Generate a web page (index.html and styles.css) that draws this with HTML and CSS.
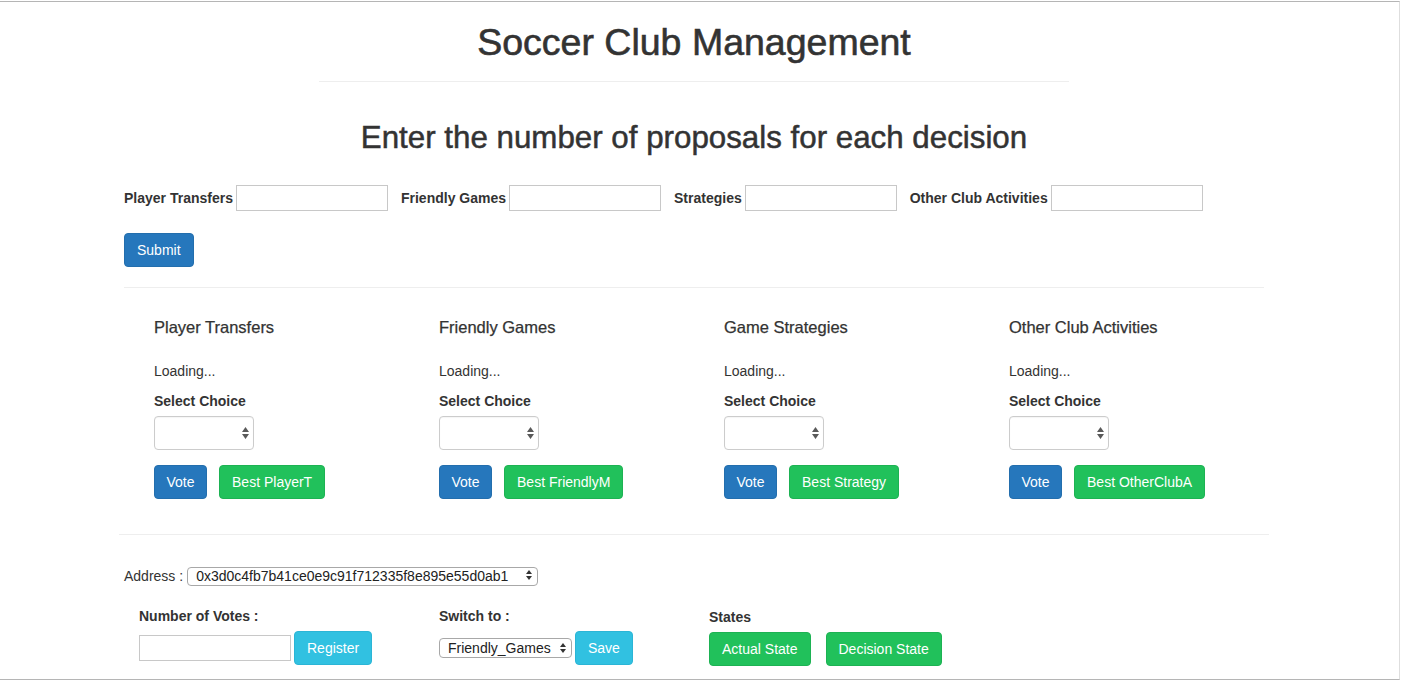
FILE: index.html
```html
<!DOCTYPE html>
<html lang="en">
<head>
<meta charset="utf-8">
<title>Soccer Club Management</title>
<link rel="stylesheet" href="styles.css">
</head>
<body>
<div class="window">
  <div class="container">
    <h1 class="title">Soccer Club Management</h1>
    <hr class="title-rule">
    <h2 class="subtitle">Enter the number of proposals for each decision</h2>

    <form class="proposal-form">
      <div class="inline-fields">
        <label class="field"><span>Player Transfers</span><input type="text" class="text-input"></label>
        <label class="field"><span>Friendly Games</span><input type="text" class="text-input"></label>
        <label class="field"><span>Strategies</span><input type="text" class="text-input"></label>
        <label class="field"><span>Other Club Activities</span><input type="text" class="text-input"></label>
      </div>
      <button class="btn btn-primary submit-btn" type="button">Submit</button>
    </form>

    <hr class="rule">

    <div class="decisions">
      <div class="decision">
        <h4 class="decision-title">Player Transfers</h4>
        <p class="loading">Loading...</p>
        <label class="choice-label">Select Choice</label>
        <div class="select-wrap">
          <select class="choice-select"></select>
          <svg class="arrows" width="7" height="12" viewBox="0 0 7 12"><path d="M0 5 L3.5 0 L7 5 Z M0 7 L7 7 L3.5 12 Z" fill="#5a5a5a"/></svg>
        </div>
        <div class="actions">
          <button class="btn btn-primary btn-vote" type="button">Vote</button>
          <button class="btn btn-success" type="button">Best PlayerT</button>
        </div>
      </div>
      <div class="decision">
        <h4 class="decision-title">Friendly Games</h4>
        <p class="loading">Loading...</p>
        <label class="choice-label">Select Choice</label>
        <div class="select-wrap">
          <select class="choice-select"></select>
          <svg class="arrows" width="7" height="12" viewBox="0 0 7 12"><path d="M0 5 L3.5 0 L7 5 Z M0 7 L7 7 L3.5 12 Z" fill="#5a5a5a"/></svg>
        </div>
        <div class="actions">
          <button class="btn btn-primary btn-vote" type="button">Vote</button>
          <button class="btn btn-success" type="button">Best FriendlyM</button>
        </div>
      </div>
      <div class="decision">
        <h4 class="decision-title">Game Strategies</h4>
        <p class="loading">Loading...</p>
        <label class="choice-label">Select Choice</label>
        <div class="select-wrap">
          <select class="choice-select"></select>
          <svg class="arrows" width="7" height="12" viewBox="0 0 7 12"><path d="M0 5 L3.5 0 L7 5 Z M0 7 L7 7 L3.5 12 Z" fill="#5a5a5a"/></svg>
        </div>
        <div class="actions">
          <button class="btn btn-primary btn-vote" type="button">Vote</button>
          <button class="btn btn-success" type="button">Best Strategy</button>
        </div>
      </div>
      <div class="decision">
        <h4 class="decision-title">Other Club Activities</h4>
        <p class="loading">Loading...</p>
        <label class="choice-label">Select Choice</label>
        <div class="select-wrap">
          <select class="choice-select"></select>
          <svg class="arrows" width="7" height="12" viewBox="0 0 7 12"><path d="M0 5 L3.5 0 L7 5 Z M0 7 L7 7 L3.5 12 Z" fill="#5a5a5a"/></svg>
        </div>
        <div class="actions">
          <button class="btn btn-primary btn-vote" type="button">Vote</button>
          <button class="btn btn-success" type="button">Best OtherClubA</button>
        </div>
      </div>
    </div>

    <hr class="rule rule-wide">

    <div class="address-row">
      <span>Address :</span>
      <div class="native-wrap address-wrap">
        <select class="native-select address-select"><option>0x3d0c4fb7b41ce0e9c91f712335f8e895e55d0ab1</option></select>
        <svg class="arrows small-arrows" width="6" height="10" viewBox="0 0 6 10"><path d="M0 4 L3 0 L6 4 Z M0 6 L6 6 L3 10 Z" fill="#333"/></svg>
      </div>
    </div>

    <div class="controls">
      <div class="control-group votes-group">
        <label class="control-label">Number of Votes :</label>
        <div class="control-row">
          <input type="text" class="text-input">
          <button class="btn btn-info" type="button">Register</button>
        </div>
      </div>
      <div class="control-group switch-group">
        <label class="control-label">Switch to :</label>
        <div class="control-row">
          <div class="native-wrap switch-wrap">
            <select class="native-select switch-select"><option>Friendly_Games</option></select>
            <svg class="arrows small-arrows" width="6" height="10" viewBox="0 0 6 10"><path d="M0 4 L3 0 L6 4 Z M0 6 L6 6 L3 10 Z" fill="#333"/></svg>
          </div>
          <button class="btn btn-info" type="button">Save</button>
        </div>
      </div>
      <div class="control-group states-group">
        <label class="control-label">States</label>
        <div class="control-row state-row">
          <button class="btn btn-success" type="button">Actual State</button>
          <button class="btn btn-success" type="button">Decision State</button>
        </div>
      </div>
    </div>
  </div>
</div>
</body>
</html>
```

FILE: styles.css
```css
* {
  box-sizing: border-box;
}

body {
  margin: 0;
  padding-top: 1px;
  background: #fff;
  color: #333;
  font-family: "Liberation Sans", Arial, Helvetica, sans-serif;
  font-size: 14px;
  line-height: 20px;
}

.window {
  width: 1400px;
  height: 679px;
  border-top: 1px solid #b5b5b5;
  border-bottom: 1px solid #b5b5b5;
  border-right: 1px solid #dedede;
  overflow: hidden;
}

.container {
  width: 1140px;
  margin-left: 124px;
  padding-top: 20px;
}

.title {
  margin: 0;
  font-size: 37.5px;
  line-height: 40px;
  font-weight: normal;
  text-align: center;
  color: #333;
  -webkit-text-stroke: 0.6px #333;
}

.title-rule {
  width: 750px;
  height: 0;
  margin: 19px auto 0;
  border: 0;
  border-top: 1px solid #eee;
}

.subtitle {
  margin: 39px 0 0;
  font-size: 31.3px;
  line-height: 34px;
  font-weight: normal;
  text-align: center;
  color: #333;
  -webkit-text-stroke: 0.5px #333;
}

.proposal-form {
  margin: 0;
}

.inline-fields {
  display: flex;
  align-items: center;
  gap: 13px;
  margin-top: 30px;
}

.field {
  display: flex;
  align-items: center;
  gap: 3px;
  font-weight: bold;
}

.text-input {
  width: 152px;
  height: 26px;
  margin: 0;
  padding: 2px 6px;
  border: 1px solid #c8c8c8;
  border-radius: 0;
  background: #fff;
  font: inherit;
}

.btn {
  display: inline-block;
  height: 34px;
  margin: 0;
  padding: 6px 12px;
  border: 1px solid transparent;
  border-radius: 4px;
  color: #fff;
  font-family: "Liberation Sans", Arial, Helvetica, sans-serif;
  font-size: 14px;
  line-height: 20px;
  white-space: nowrap;
  cursor: pointer;
}

.btn-vote {
  padding: 6px 11.5px;
}

.btn-primary {
  background: #2677bc;
  border-color: #236ead;
}

.btn-success {
  background: #21c15b;
  border-color: #1db253;
}

.btn-info {
  background: #31c1e1;
  border-color: #2bb5d6;
}

.submit-btn {
  display: block;
  margin-top: 22px;
}

.rule {
  height: 0;
  margin: 20px 0 0;
  border: 0;
  border-top: 1px solid #eee;
}

.rule-wide {
  margin: 35px -5px 0;
}

.decisions {
  display: flex;
  margin-top: 29px;
  padding-left: 30px;
}

.decision {
  flex: 0 0 285px;
}

.decision-title {
  margin: 0;
  font-size: 16.5px;
  line-height: 20px;
  font-weight: normal;
  -webkit-text-stroke: 0.25px #333;
}

.loading {
  margin: 24px 0 0;
}

.choice-label {
  display: block;
  margin-top: 10px;
  font-weight: bold;
}

.select-wrap {
  position: relative;
  width: 100px;
  height: 34px;
  margin-top: 5px;
}

.choice-select {
  width: 100px;
  height: 34px;
  margin: 0;
  border: 1px solid #ccc;
  border-radius: 4px;
  background: #fff;
  appearance: none;
  -webkit-appearance: none;
  box-shadow: inset 0 1px 1px rgba(0, 0, 0, 0.04);
}

.arrows {
  position: absolute;
  right: 5px;
  top: 11px;
}

.actions {
  display: flex;
  gap: 12px;
  margin-top: 15px;
}

.address-row {
  display: flex;
  align-items: center;
  gap: 4px;
  height: 19px;
  margin-top: 31px;
}

.native-wrap {
  position: relative;
  height: 19px;
}

.native-select {
  height: 100%;
  margin: 0;
  padding: 0 0 0 8px;
  border: 1px solid #a8a8a8;
  border-radius: 4px;
  background: #fff;
  color: #222;
  font-family: "Liberation Sans", Arial, Helvetica, sans-serif;
  font-size: 14px;
  appearance: none;
  -webkit-appearance: none;
}

.address-wrap {
  width: 351px;
}

.address-select {
  width: 351px;
}

.small-arrows {
  top: 4px;
  right: 6px;
}

.controls {
  display: flex;
  margin-top: 21px;
  padding-left: 15px;
}

.votes-group {
  width: 300px;
}

.switch-group {
  width: 270px;
}

.states-group {
  margin-top: 1px;
}

.control-label {
  display: block;
  font-weight: bold;
}

.control-row {
  display: flex;
  align-items: center;
  gap: 3px;
  height: 34px;
  margin-top: 5px;
}

.switch-wrap {
  width: 133px;
  height: 20px;
}

.switch-select {
  width: 133px;
}

.switch-wrap .small-arrows {
  top: 5px;
}

.state-row {
  gap: 15px;
}
```
